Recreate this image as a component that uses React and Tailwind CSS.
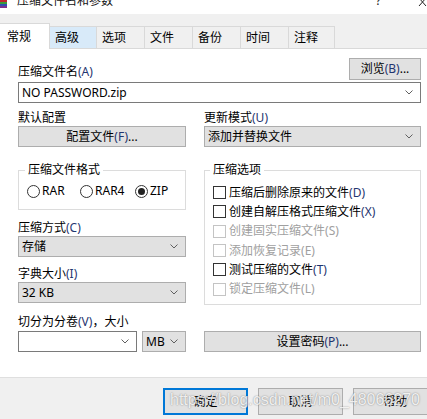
import React from "react";

const Chevron = () => (
  <svg width="8" height="5" viewBox="0 0 8 5" className="shrink-0">
    <path d="M0.5 0.5 L4 4 L7.5 0.5" fill="none" stroke="#606060" strokeWidth="1" />
  </svg>
);

const M = ({ children }) => <span className="text-[#1f3570]">{children}</span>;

function Select({ value, white }) {
  return (
    <div
      className={
        white
          ? "h-[21px] flex items-center justify-between pl-[3px] pr-[7px] border border-[#7a7a7a] bg-white"
          : "h-[21px] flex items-center justify-between pl-[3px] pr-[7px] border border-[#adadad] bg-[#e1e1e1]"
      }
    >
      <span className="truncate">{value}</span>
      <Chevron />
    </div>
  );
}

function Check({ label, m, disabled }) {
  return (
    <div className="h-[19.3px] flex items-center">
      <span
        className={
          disabled
            ? "w-[13px] h-[13px] border border-[#c4c4c4] bg-white shrink-0"
            : "w-[13px] h-[13px] border border-[#333333] bg-white shrink-0"
        }
      />
      <span className={disabled ? "ml-[3px] text-[#a0a0a0]" : "ml-[3px] text-black"}>
        {label}
        {disabled ? <span>({m})</span> : <M>({m})</M>}
      </span>
    </div>
  );
}

function Radio({ label, checked, w }) {
  return (
    <div className={`flex items-center ${w}`}>
      <span className="w-[13px] h-[13px] rounded-full border border-[#333333] bg-white flex items-center justify-center shrink-0">
        {checked && <span className="w-[7px] h-[7px] rounded-full bg-[#222222]" />}
      </span>
      <span className="ml-[2px]">{label}</span>
    </div>
  );
}

function Btn({ children, className }) {
  return (
    <div
      className={`flex items-center justify-center border border-[#adadad] bg-[#e1e1e1] ${className}`}
    >
      {children}
    </div>
  );
}

export default function App() {
  const tabs = [
    ["高级", "w-[47px] bg-[#d8eaf9]"],
    ["选项", "w-[48px] bg-[#f0f0f0]"],
    ["文件", "w-[48px] bg-[#f0f0f0]"],
    ["备份", "w-[48px] bg-[#f0f0f0]"],
    ["时间", "w-[48px] bg-[#f0f0f0]"],
    ["注释", "w-[46px] bg-[#f0f0f0]"],
  ];
  return (
    <div className="w-[427px] h-[419px] bg-white relative overflow-hidden text-[12px] leading-[16px] text-black font-['Noto_Sans','Noto_Sans_CJK_SC',sans-serif]">
      {/* Title bar */}
      <div className="h-[14px] bg-white flex items-start relative overflow-hidden">
        <svg width="7" height="8" viewBox="0 0 7 8" className="shrink-0">
          <rect x="0" y="0" width="7" height="2" fill="#c0262d" />
          <rect x="0" y="2" width="7" height="2" fill="#3a9a3a" />
          <rect x="0" y="4" width="7" height="2" fill="#2d4fb0" />
          <rect x="0" y="6" width="7" height="2" fill="#7a2f8f" />
        </svg>
        <span className="ml-[10px] mt-[-5px] leading-[12px] text-[12px] text-[#111]">压缩文件名和参数</span>
        <span className="ml-auto mr-[37px] mt-[-5px] leading-[12px] text-[12px] text-[#222]">?</span>
        <svg width="9" height="7" viewBox="0 0 9 7" className="shrink-0 mr-0">
          <path d="M1 -2 L8 6 M8 -2 L1 6" stroke="#222" strokeWidth="1" />
        </svg>
      </div>
      <div className="h-[9px] bg-[#f0f0f0]" />
      {/* Tabs */}
      <div className="h-[26px] bg-[#f0f0f0] border-b border-[#d9d9d9] flex items-end">
        <div className="w-[50px] h-[26px] -mb-[1px] bg-white border-t border-r border-[#d9d9d9] relative z-10 pl-[7px] pt-[5px]">
          常规
        </div>
        {tabs.map(([t, c]) => (
          <div
            key={t}
            className={`${c} h-[22px] border-t border-r border-[#d9d9d9] pl-[5px] pt-[3px]`}
          >
            {t}
          </div>
        ))}
      </div>
      {/* Content */}
      <div className="h-[328px] bg-white pl-[18px] pr-[6px] pt-[9px]">
        <div className="flex items-end justify-between">
          <span>
            压缩文件名<M>(A)</M>
          </span>
          <Btn className="w-[72px] h-[22px]">
            浏览<M>(B)</M>...
          </Btn>
        </div>
        <div className="mt-[2px]">
          <Select value="NO PASSWORD.zip" white />
        </div>
        <div className="flex gap-[18px]">
          {/* Left column */}
          <div className="w-[168px] flex flex-col">
            <span className="mt-[7px]">默认配置</span>
            <Btn className="h-[21px]">
              配置文件<M>(F)</M>...
            </Btn>
            <div className="mt-[23px] h-[40px] border border-[#dcdcdc] relative pl-[8px] pt-[12px]">
              <span className="absolute left-[6px] -top-[9px] bg-white px-[3px]">压缩文件格式</span>
              <div className="flex items-center h-[16px]">
                <Radio label="RAR" w="w-[53px]" />
                <Radio label="RAR4" w="w-[55px]" />
                <Radio label="ZIP" checked w="" />
              </div>
            </div>
            <span className="mt-[10px]">
              压缩方式<M>(C)</M>
            </span>
            <Select value="存储" />
            <span className="mt-[9px]">
              字典大小<M>(I)</M>
            </span>
            <Select value="32 KB" />
            <span className="mt-[11px]">
              切分为分卷<M>(V)</M>，大小
            </span>
            <div className="mt-[1px] flex gap-[5px]">
              <div className="w-[119px]">
                <Select value="" white />
              </div>
              <div className="flex-1">
                <Select value="MB" />
              </div>
            </div>
          </div>
          {/* Right column */}
          <div className="flex-1 flex flex-col">
            <span className="mt-[7px]">
              更新模式<M>(U)</M>
            </span>
            <Select value="添加并替换文件" />
            <div className="mt-[23px] h-[135px] border border-[#dcdcdc] relative pl-[8px] pt-[12px]">
              <span className="absolute left-[5px] -top-[9px] bg-white px-[3px]">压缩选项</span>
              <Check label="压缩后删除原来的文件" m="D" />
              <Check label="创建自解压格式压缩文件" m="X" />
              <Check label="创建固实压缩文件" m="S" disabled />
              <Check label="添加恢复记录" m="E" disabled />
              <Check label="测试压缩的文件" m="T" />
              <Check label="锁定压缩文件" m="L" disabled />
            </div>
            <Btn className="mt-[26px] h-[21px]">
              设置密码<M>(P)</M>...
            </Btn>
          </div>
        </div>
      </div>
      {/* Bottom bar */}
      <div className="h-[42px] bg-[#f0f0f0] border-t border-[#dfdfdf] pt-[10px] pl-[163px] flex gap-[10px]">
        <div className="w-[85px] h-[27px] shrink-0 flex items-center justify-center border-2 border-[#0078d7] bg-[#e1e1e1]">
          确定
        </div>
        <Btn className="w-[85px] h-[27px] shrink-0">取消</Btn>
        <Btn className="w-[85px] h-[27px] shrink-0">帮助</Btn>
      </div>
      {/* Watermark */}
      <div className="absolute left-[170px] top-[391px] text-[16px] leading-[18px] font-['Liberation_Sans',sans-serif] text-white/85 [text-shadow:0_0_1.5px_rgba(0,0,0,0.5)] pointer-events-none whitespace-nowrap">
        https://blog.csdn.net/m0_48066270
      </div>
    </div>
  );
}
